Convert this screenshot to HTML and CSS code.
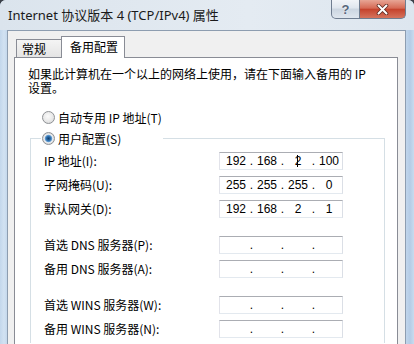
FILE: index.html
```html
<!doctype html>
<html>
    <head>
        <meta charset="UTF-8" />
        <meta name="viewport" content="width=device-width" />
        <title>Internet 协议版本 4 (TCP/IPv4) 属性</title>
        <link rel="stylesheet" href="styles.css">
    </head>
    <body>
        <div class="window">
            <div class="titlebar">
                <span class="title">Internet 协议版本 4 (TCP/IPv4) 属性</span>
                <div class="captionButtons">
                    <button class="cap help" title="帮助">?</button>
                    <button class="cap close" title="关闭">
                        <svg width="13" height="11" viewBox="0 0 13 11">
                            <path d="M2.5 1.5 L10.5 9.5 M10.5 1.5 L2.5 9.5" stroke="#5e2a22" stroke-width="3.6" stroke-linecap="round" />
                            <path d="M2.5 1.5 L10.5 9.5 M10.5 1.5 L2.5 9.5" stroke="#ffffff" stroke-width="2" stroke-linecap="round" />
                        </svg>
                    </button>
                </div>
            </div>
            <div class="client">
                <div class="tabs">
                    <div class="tab">常规</div>
                    <div class="tab active">备用配置</div>
                </div>
                <div class="panel">
                    <p class="intro">如果此计算机在一个以上的网络上使用，请在下面输入备用的 IP 设置。</p>
                    <div class="option">
                        <span class="radio"></span>
                        <span>自动专用 IP 地址(T)</span>
                    </div>
                    <fieldset class="group">
                        <legend class="option">
                            <span class="radio checked"></span>
                            <span>用户配置(S)</span>
                        </legend>
                        <div class="fieldSets">
                            <div class="fields">
                                <span class="label">IP 地址(I):</span>
                                <div class="ip">
                                    <span>192</span><i>.</i><span>168</span><i>.</i><span class="caretField">2</span><i>.</i><span>100</span>
                                </div>
                                <span class="label">子网掩码(U):</span>
                                <div class="ip">
                                    <span>255</span><i>.</i><span>255</span><i>.</i><span>255</span><i>.</i><span>0</span>
                                </div>
                                <span class="label">默认网关(D):</span>
                                <div class="ip">
                                    <span>192</span><i>.</i><span>168</span><i>.</i><span>2</span><i>.</i><span>1</span>
                                </div>
                            </div>
                            <div class="fields">
                                <span class="label">首选 DNS 服务器(P):</span>
                                <div class="ip">
                                    <span></span><i>.</i><span></span><i>.</i><span></span><i>.</i><span></span>
                                </div>
                                <span class="label">备用 DNS 服务器(A):</span>
                                <div class="ip">
                                    <span></span><i>.</i><span></span><i>.</i><span></span><i>.</i><span></span>
                                </div>
                            </div>
                            <div class="fields">
                                <span class="label">首选 WINS 服务器(W):</span>
                                <div class="ip">
                                    <span></span><i>.</i><span></span><i>.</i><span></span><i>.</i><span></span>
                                </div>
                                <span class="label">备用 WINS 服务器(N):</span>
                                <div class="ip">
                                    <span></span><i>.</i><span></span><i>.</i><span></span><i>.</i><span></span>
                                </div>
                            </div>
                        </div>
                    </fieldset>
                </div>
            </div>
        </div>
    </body>
</html>
```

FILE: styles.css
```css
* {
    box-sizing: border-box;
}
html,
body {
    margin: 0;
}
body {
    width: 414px;
    height: 344px;
    overflow: hidden;
    background-color: #3b4048;
    font-family: "Noto Sans CJK SC", sans-serif;
    font-size: 12px;
    color: #000;
}
.window {
    height: 344px;
    display: flex;
    flex-direction: column;
    border-radius: 6px 6px 0 0;
    background: linear-gradient(to right, #c3d7ec 0, #d2e2f2 4px, #c0d5eb 8px, #c0d5eb 406px, #b4cce6 410px, #c8dbee 414px);
}
.titlebar {
    height: 30px;
    flex-shrink: 0;
    display: flex;
    justify-content: space-between;
    align-items: flex-start;
    padding: 0 8px;
    border-radius: 6px 6px 0 0;
    background: linear-gradient(to right, #dbe4ed, #e4ebf2 60%, #dde6ef);
}
.title {
    font-family: "Noto Sans", "Noto Sans CJK SC", sans-serif;
    font-size: 13px;
    line-height: 30px;
    color: #1a1a1a;
}
.captionButtons {
    display: flex;
}
.cap {
    height: 19px;
    padding: 0;
    margin: 0;
    border: 1px solid #6f7d90;
    border-top: none;
    display: flex;
    align-items: center;
    justify-content: center;
    cursor: pointer;
}
.help {
    width: 29px;
    border-radius: 0 0 0 5px;
    background: linear-gradient(#f1f4f8, #dfe6ee 45%, #cbd5e0 50%, #dfe6ee);
    font-family: "Liberation Sans", Arial, sans-serif;
    font-weight: bold;
    font-size: 13px;
    color: #56667c;
    text-shadow: 0 0 2px #fff;
}
.close {
    width: 46px;
    border-left: none;
    border-radius: 0 0 5px 0;
    background: linear-gradient(#e7a595, #d66a55 45%, #c5432d 52%, #d5735d);
}
.client {
    flex: 1;
    min-height: 0;
    display: flex;
    flex-direction: column;
    margin: 0 8px 0 7px;
    padding: 5px 7px 0 6px;
    background-color: #f0f0f0;
    border: 1px solid #8d9db0;
    border-bottom: none;
}
.tabs {
    height: 21px;
    flex-shrink: 0;
    display: flex;
    align-items: flex-end;
    padding-left: 2px;
}
.tab {
    height: 18px;
    padding: 0 0 0 5px;
    width: 46px;
    line-height: 17px;
    border: 1px solid #898c95;
    border-bottom: none;
    background: linear-gradient(#f4f4f4, #e4e4e4);
}
.tab.active {
    position: relative;
    z-index: 1;
    width: 64px;
    height: 22px;
    margin-left: -1px;
    margin-bottom: -1px;
    padding-left: 8px;
    line-height: 19px;
    background: #fff;
}
.panel {
    flex: 1;
    min-height: 0;
    padding: 9px 12px 0 13px;
    background-color: #fff;
    border: 1px solid #898c95;
    border-bottom: none;
}
.intro {
    margin: 0;
    width: 345px;
    line-height: 14px;
}
.option {
    height: 16px;
    display: flex;
    align-items: center;
    gap: 3px;
    margin: 14px 0 0 14px;
}
.radio {
    width: 13px;
    height: 13px;
    flex-shrink: 0;
    border-radius: 50%;
    border: 1px solid #8e9195;
    background: radial-gradient(circle at 45% 40%, #fbfbfb 0, #e8e8e8 55%, #d0d0d0 100%);
}
.radio.checked {
    background: radial-gradient(circle, #123f6e 0, #2b6aa6 2px, #5f9ad0 3.2px, #eef0f2 4.2px, #e0e0e0 5px, #cfcfcf 100%);
}
.group {
    margin: 5px 0 0 2px;
    padding: 6px 0 5px 13px;
    min-width: 0;
    border: 1px solid #d5dfe5;
    border-bottom: none;
}
.group legend.option {
    width: 122px;
    margin: 0 0 0 -3px;
    padding: 0 0 0 1px;
}
.fieldSets {
    display: flex;
    flex-direction: column;
    gap: 18px;
}
.fields {
    display: grid;
    grid-template-columns: 175px 124px;
    row-gap: 6px;
    align-items: center;
}
.label {
    line-height: 18px;
}
.ip {
    height: 18px;
    display: grid;
    grid-template-columns: 26px 5px 26px 5px 26px 5px 26px;
    align-items: center;
    padding: 0 3px;
    background-color: #fff;
    border: 1px solid;
    border-color: #abadb3 #dbdfe6 #e3e9ef #e2e3ea;
    font-family: "Liberation Sans", Arial, sans-serif;
    font-size: 12px;
    line-height: 16px;
}
.ip span,
.ip i {
    font-style: normal;
    text-align: center;
}
.caretField {
    position: relative;
}
.caretField::after {
    content: "";
    position: absolute;
    left: 12px;
    top: 2px;
    height: 12px;
    border-left: 1px solid #000;
}
```
